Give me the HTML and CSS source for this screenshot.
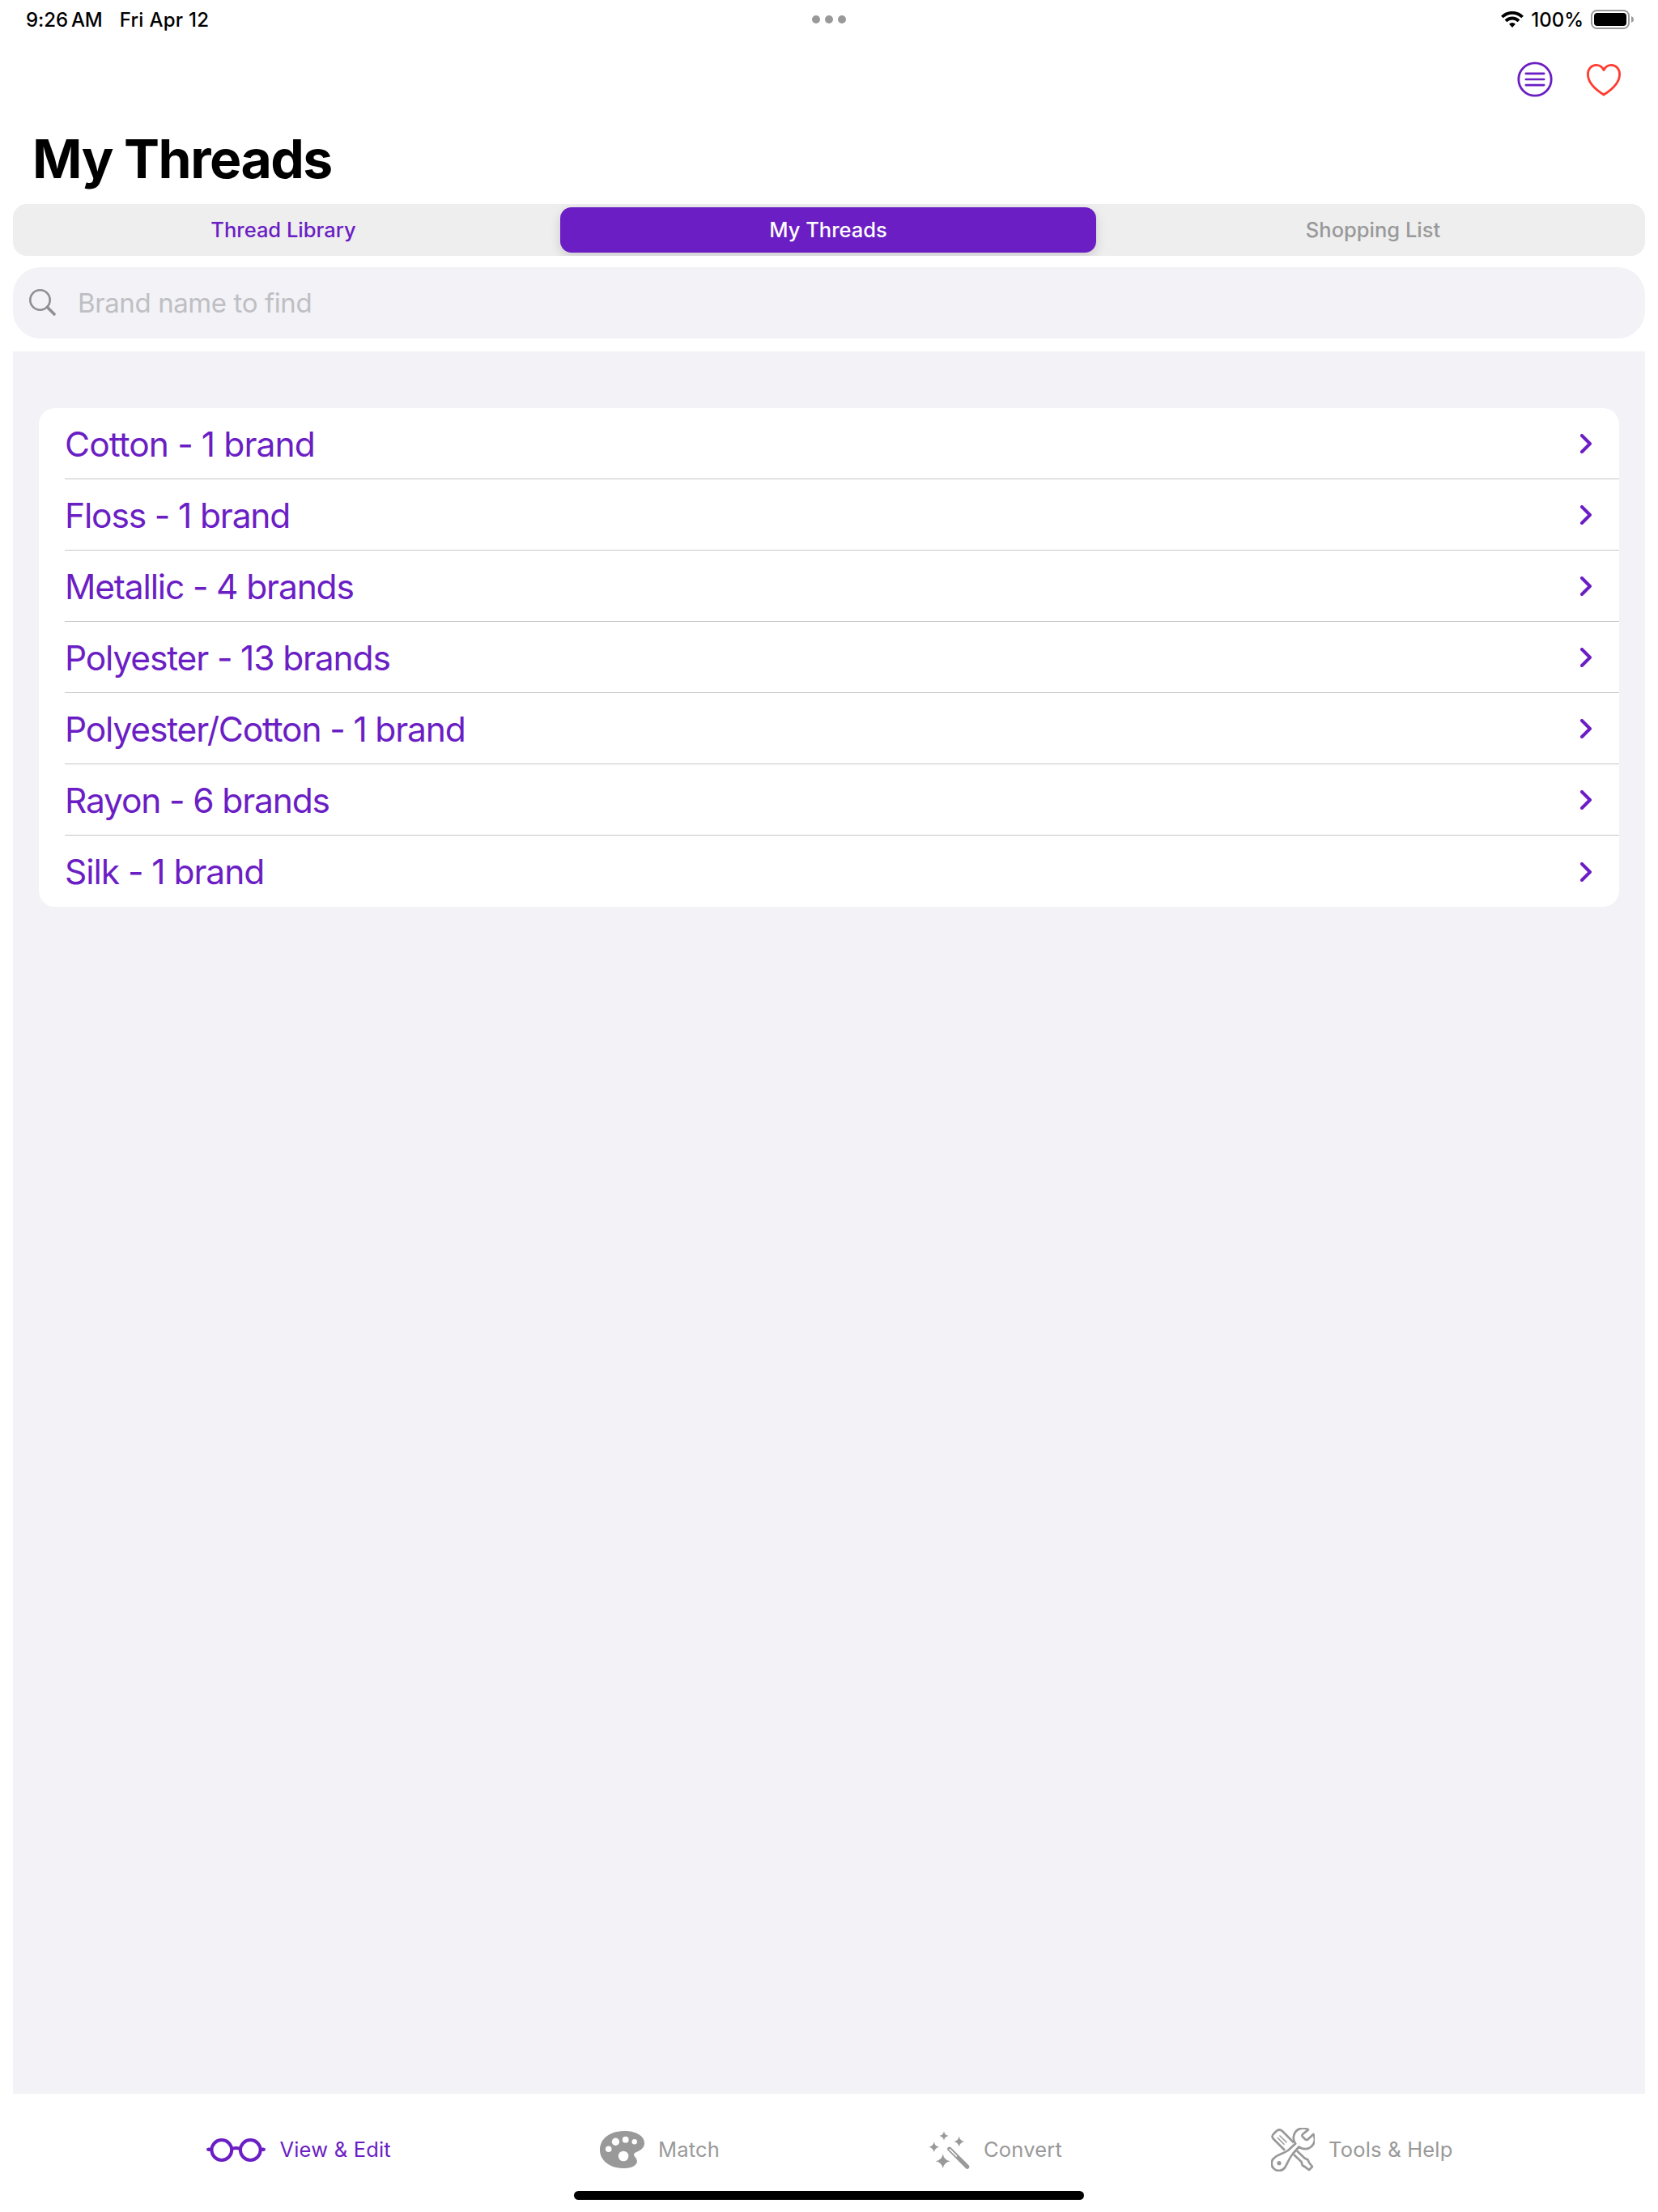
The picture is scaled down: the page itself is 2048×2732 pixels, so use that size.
FILE: index.html
```html
<!DOCTYPE html>
<html lang="en">
<head>
<meta charset="utf-8">
<title>My Threads</title>
<link rel="stylesheet" href="styles.css">
</head>
<body>
<header class="status-bar">
  <div class="status-left"><span class="time">9:26<span class="ampm">AM</span></span><span class="date">Fri Apr 12</span></div>
  <div class="multitask"><i></i><i></i><i></i></div>
  <div class="status-right">
    <svg class="wifi" width="28" height="20" viewBox="0 0 28 20" fill="none" stroke="#000" stroke-width="3.8"><path d="M1.400 7a17.800 17.800 0 0 1 25.200 0"/><path d="M6 11.800a11.300 11.300 0 0 1 16 0"/><path d="M14 20l-4-4.300a5.800 5.800 0 0 1 8 0z" fill="#000" stroke="none"/></svg>
    <span class="percent">100%</span>
    <svg class="battery" width="54" height="24" viewBox="0 0 54 24"><rect x="1" y="1" width="46" height="22" rx="6.500" fill="none" stroke="#9b9b9b" stroke-width="2"/><rect x="4" y="4" width="40" height="16" rx="4" fill="#000"/><path d="M50 8c4 1.200 4 6.800 0 8z" fill="#9b9b9b"/></svg>
  </div>
</header>
<nav class="toolbar">
  <svg width="44" height="44" viewBox="0 0 44 44" fill="none" stroke="#6b1ec4" stroke-width="2.800" stroke-linecap="round"><circle cx="22" cy="22" r="20.200"/><path d="M10.800 14.900h22.400M10.800 22h22.400M10.800 29.100h22.400" stroke-width="2.600"/></svg>
  <svg class="heart" width="42" height="40" viewBox="0 0 42 40" fill="none" stroke="#ff3b30" stroke-width="2.800" stroke-linejoin="round"><path d="M21 7.500C19 3.600 15.500 1.400 11.700 1.400C5.700 1.400 1.400 6.200 1.400 12.800C1.400 22.500 10.500 31.500 21 38C31.500 31.500 40.600 22.500 40.600 12.800C40.600 6.200 36.300 1.400 30.300 1.400C26.500 1.400 23 3.600 21 7.500Z"/></svg>
</nav>
<h1 class="title">My Threads</h1>
<main class="content">
  <div class="segments">
    <button class="segment accent">Thread Library</button>
    <button class="segment selected">My Threads</button>
    <button class="segment muted">Shopping List</button>
  </div>
  <div class="search">
    <svg width="34" height="34" viewBox="0 0 34 34" fill="none" stroke="#8e8e93" stroke-linecap="round"><circle cx="13.500" cy="13.500" r="12.200" stroke-width="2.600"/><path d="M22.500 22.500L31 31" stroke-width="3.600"/></svg>
    <span class="placeholder">Brand name to find</span>
  </div>
  <section class="list-area">
    <ul class="list">
      <li class="row"><span>Cotton - 1 brand</span><svg class="chevron" viewBox="0 0 14 24"><path d="M2 2l10 10L2 22"/></svg></li>
      <li class="row"><span>Floss - 1 brand</span><svg class="chevron" viewBox="0 0 14 24"><path d="M2 2l10 10L2 22"/></svg></li>
      <li class="row"><span>Metallic - 4 brands</span><svg class="chevron" viewBox="0 0 14 24"><path d="M2 2l10 10L2 22"/></svg></li>
      <li class="row"><span>Polyester - 13 brands</span><svg class="chevron" viewBox="0 0 14 24"><path d="M2 2l10 10L2 22"/></svg></li>
      <li class="row"><span>Polyester/Cotton - 1 brand</span><svg class="chevron" viewBox="0 0 14 24"><path d="M2 2l10 10L2 22"/></svg></li>
      <li class="row"><span>Rayon - 6 brands</span><svg class="chevron" viewBox="0 0 14 24"><path d="M2 2l10 10L2 22"/></svg></li>
      <li class="row"><span>Silk - 1 brand</span><svg class="chevron" viewBox="0 0 14 24"><path d="M2 2l10 10L2 22"/></svg></li>
    </ul>
  </section>
</main>
<footer class="tab-bar">
  <div class="tabs">
    <a class="tab active">
      <svg width="73" height="29" viewBox="0 0 73 29" fill="none" stroke="currentColor" stroke-width="4"><circle cx="18.800" cy="14.500" r="12.400"/><circle cx="54.300" cy="14.500" r="12.400"/><path d="M31.500 13Q36.500 10.800 41.500 13M2 13.800H6M67 13.800H71"/><path d="M2 13.800h2M69 13.800h2" stroke-linecap="round"/></svg>
      <span>View &amp; Edit</span></a>
    <a class="tab">
      <svg width="55" height="46" viewBox="0 0 55 46"><path fill="currentColor" d="M30 0C45 0 55 6 55 15C55 21 50 24 45 26C42 27.500 41 29 43 31.500C46 35 47 38 44.500 41C41.500 45 35 46 29 46C12 46 0 36 0 23.500C0 9 13 0 30 0Z"/><g fill="#fff"><circle cx="10.700" cy="22.300" r="3.800"/><circle cx="19.400" cy="13.300" r="4.700"/><circle cx="31.700" cy="10.700" r="3.900"/><circle cx="42.700" cy="13.300" r="3.200"/><circle cx="29.100" cy="31" r="6.300"/></g></svg>
      <span>Match</span></a>
    <a class="tab">
      <svg width="51" height="47" viewBox="0 0 51 47"><g fill="currentColor"><path d="M19 .3Q19.800 5.200 24.700 6Q19.800 6.800 19 11.700Q18.200 6.800 13.300 6Q18.200 5.200 19 .3Z"/><path d="M37.700 6.500Q38.700 12 44.200 13Q38.700 14 37.700 19.500Q36.700 14 31.200 13Q36.700 12 37.700 6.500Z"/><path d="M6.700 13.200Q7.700 18.700 13.200 19.700Q7.700 20.700 6.700 26.200Q5.700 20.700 .2 19.700Q5.700 18.700 6.700 13.200Z"/><path d="M17.700 28.300Q19 36 26.700 37.300Q19 38.600 17.700 46.300Q16.400 38.600 8.700 37.300Q16.400 36 17.700 28.300Z"/></g><path d="M25.800 22.200L47.700 44.200" stroke="currentColor" stroke-width="5.200" stroke-linecap="round"/><path d="M26.200 22.600L34.500 31" stroke="#fff" stroke-width="1.500" stroke-linecap="round"/></svg>
      <span>Convert</span></a>
    <a class="tab">
      <svg width="54" height="54" viewBox="0 0 54 54" fill="none" stroke="currentColor" stroke-width="2.700" stroke-linejoin="round"><path d="M28 18.200L14.200 4.200Q10.200 .8 6.500 4.200L3.500 7.200Q-.2 10.500 3.200 14L17 27.800"/><path d="M10.500 9.500L19.500 18.300M7.800 12L16.500 20.700" stroke-width="1.500"/><path d="M32 28.500L41.500 37.500L45.500 39.500L47 43L51 48L47 52L42 48.300L38.800 46.500L37.500 42L28 33"/><path fill="#fff" d="M46 2.400A11.800 11.800 0 0 0 30.200 19.500L21 28C15 32 9 33 5 36.300A9 9 0 1 0 17.500 48.500C20 45 22 38 27 32L34.500 23.500A12 12 0 0 0 52.300 8L45.500 14.300Q43.800 15.500 42 14L39 11Q37.800 9.500 39 8Z"/><circle cx="10" cy="43.700" r="2.600" fill="currentColor" stroke="none"/></svg>
      <span>Tools &amp; Help</span></a>
  </div>
  <div class="home-indicator"></div>
</footer>
</body>
</html>
```
FILE: styles.css
```css
* { box-sizing: border-box; }
body { margin: 0; width: 2048px; height: 2732px; display: flex; flex-direction: column; background: #fff; color: #000; font-family: Inter, "Liberation Sans", sans-serif; }
svg { flex: none; }

.status-bar { height: 48px; display: grid; grid-template-columns: 1fr auto 1fr; font-size: 24px; font-weight: 500; }
.status-left, .status-right { display: flex; align-items: center; }
.status-left { gap: 21px; padding-left: 32px; }
.time { letter-spacing: -0.1px; }
.ampm { margin-left: 4px; }
.date { letter-spacing: 0.3px; }
.status-right { justify-content: flex-end; gap: 9px; padding-right: 29px; }
.multitask { display: flex; align-items: center; gap: 6px; }
.multitask i { width: 10px; height: 10px; border-radius: 50%; background: #999; }

.toolbar { height: 99px; display: flex; justify-content: flex-end; align-items: center; gap: 42px; padding-right: 46px; }
.heart { margin-top: 2px; }
.title { margin: 0; height: 105px; padding-left: 40px; font-size: 66px; line-height: 98px; font-weight: 700; letter-spacing: -1.5px; }

.content { flex: 1; display: flex; flex-direction: column; padding: 0 16px; }
.segments { height: 64px; display: flex; gap: 11px; border-radius: 17px; background: #eee; padding: 4px 5px 4px 3px; overflow: hidden; }
.segment { flex: 1 1 0; border: 0; border-radius: 14px; background: none; padding: 0 0 1px; font: 450 25.5px Inter, "Liberation Sans", sans-serif; }
.accent { color: #6b1ec4; }
.selected { color: #fff; background: #6b1ec4; font-weight: 500; box-shadow: 0 5px 14px rgba(0, 0, 0, 0.14); }
.muted { color: #999; }

.search { height: 88px; margin: 14px 0 16px; display: flex; align-items: center; border-radius: 34px; background: #f2f2f7; padding-left: 20px; gap: 26px; }
.placeholder { font-size: 33px; color: #bfbfc3; letter-spacing: -0.4px; }

.list-area { flex: 1; background: #f2f2f7; padding: 70px 32px 0; }
.list { list-style: none; margin: 0; padding: 0; background: #fff; border-radius: 20px; }
.row { height: 88px; margin-left: 32px; padding: 1px 34px 0 0; display: flex; justify-content: space-between; align-items: center; font-size: 42.5px; letter-spacing: -1.15px; color: #6b1ec4; border-bottom: 1px solid #c6c6c8; }
.row:first-child { letter-spacing: -0.9px; }
.row:last-child { border-bottom: 0; letter-spacing: -1.05px; }
.chevron { width: 14px; height: 24px; fill: none; stroke: #6b1ec4; stroke-width: 4; stroke-linecap: round; stroke-linejoin: round; }

.tab-bar { height: 146px; font-size: 25.5px; letter-spacing: 0.2px; color: #999; }
.tabs { display: flex; justify-content: center; gap: 258px; padding: 42px 0 0 2px; }
.tab { height: 54px; display: flex; align-items: center; gap: 17px; white-space: nowrap; }
.tab span { padding-bottom: 1px; }
.active { color: #6b1ec4; }
.home-indicator { width: 630px; height: 11px; border-radius: 6px; background: #000; margin: 24px auto 15px; }
```
